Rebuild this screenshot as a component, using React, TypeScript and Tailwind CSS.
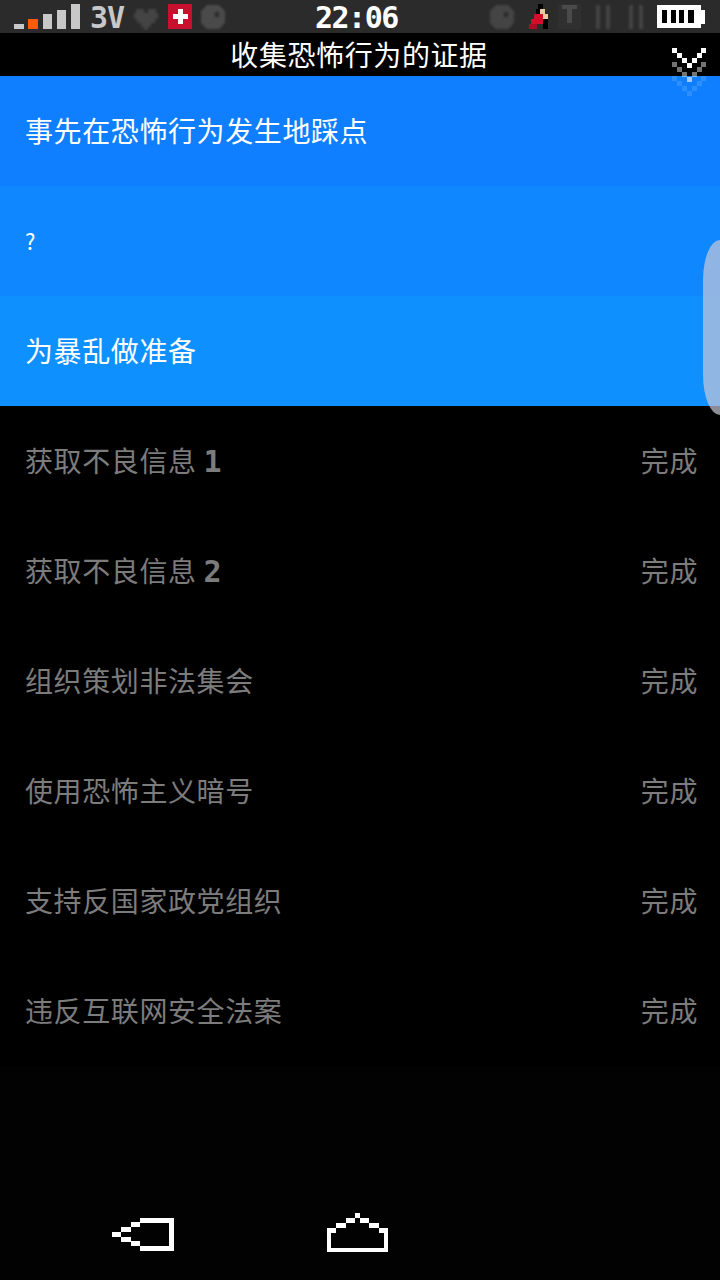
const cjk = { fontFamily: '"Noto Sans CJK SC", "Noto Sans", sans-serif' };
const pixel = { fontFamily: '"DejaVu Sans Mono", "Liberation Mono", monospace' };

const tasks = [
  { title: '获取不良信息', num: '1' },
  { title: '获取不良信息', num: '2' },
  { title: '组织策划非法集会' },
  { title: '使用恐怖主义暗号' },
  { title: '支持反国家政党组织' },
  { title: '违反互联网安全法案' },
];

const activeRows = [
  { title: '事先在恐怖行为发生地踩点', bg: 'bg-[#0f7fff]', size: 'text-[28px]' },
  { title: '?', bg: 'bg-[#0f88ff]', size: 'text-[22px]' },
  { title: '为暴乱做准备', bg: 'bg-[#0f90ff]', size: 'text-[28px]' },
];

function Rects({ w, h, fill, rects, className }: { w: number; h: number; fill: string; rects: number[][]; className?: string }) {
  return (
    <svg width={w} height={h} viewBox={`0 0 ${w} ${h}`} shapeRendering="crispEdges" fill={fill} className={`block shrink-0 ${className ?? ''}`}>
      {rects.map((r, i) => (
        <rect key={i} x={r[0]} y={r[1]} width={r[2]} height={r[3]} />
      ))}
    </svg>
  );
}

function Signal() {
  return (
    <svg width="67" height="25" viewBox="0 0 67 25" shapeRendering="crispEdges" className="block shrink-0">
      <rect x="0" y="20" width="10" height="5" fill="#c8c8c8" />
      <rect x="14" y="15" width="10" height="10" fill="#ff5a0a" />
      <rect x="29" y="10" width="9" height="15" fill="#c8c8c8" />
      <rect x="43" y="6" width="9" height="19" fill="#c8c8c8" />
      <rect x="57" y="0" width="9" height="25" fill="#c8c8c8" />
    </svg>
  );
}

function SwissFlag() {
  return (
    <svg width="24" height="25" viewBox="0 0 24 25" shapeRendering="crispEdges" className="block shrink-0">
      <rect width="24" height="25" fill="#c80f2e" />
      <rect x="10" y="5" width="5" height="15" fill="#fff" />
      <rect x="5" y="10" width="15" height="5" fill="#fff" />
    </svg>
  );
}

function Figure() {
  return (
    <svg width="20" height="25" viewBox="0 0 20 25" shapeRendering="crispEdges" className="block shrink-0">
      <rect x="9" y="0" width="5" height="5" fill="#000" />
      <rect x="7" y="5" width="5" height="5" fill="#000" />
      <rect x="11" y="5" width="5" height="5" fill="#f0c8a0" />
      <rect x="14" y="10" width="5" height="5" fill="#f0c8a0" />
      <rect x="5" y="10" width="9" height="5" fill="#d0102a" />
      <rect x="2" y="15" width="12" height="5" fill="#d0102a" />
      <rect x="14" y="15" width="5" height="10" fill="#000" />
      <rect x="0" y="20" width="8" height="5" fill="#a80f24" />
    </svg>
  );
}

function Battery() {
  return (
    <svg width="48" height="23" viewBox="0 0 48 23" shapeRendering="crispEdges" className="block shrink-0">
      <rect width="44" height="23" fill="#fff" />
      <rect x="44" y="5" width="4" height="14" fill="#fff" />
      <rect x="5" y="5" width="5" height="13" fill="#000" />
      <rect x="14" y="5" width="5" height="13" fill="#000" />
      <rect x="22" y="5" width="5" height="13" fill="#000" />
      <rect x="31" y="5" width="6" height="13" fill="#000" />
    </svg>
  );
}

function Heart() {
  return (
    <Rects
      w={24}
      h={23}
      fill="#444444"
      className="blur-[1px]"
      rects={[[2, 2, 8, 5], [14, 2, 8, 5], [0, 6, 24, 6], [3, 12, 18, 4], [7, 16, 10, 4], [10, 20, 4, 3]]}
    />
  );
}

function Gear({ color }: { color: string }) {
  return (
    <svg width="24" height="24" viewBox="0 0 24 24" className="block shrink-0 blur-[1px]">
      <path fill={color} fillRule="evenodd" d="M6 0H18L24 6V18L18 24H6L0 18V6ZM14 7V12H18V7Z" />
    </svg>
  );
}

function StatusBar() {
  return (
    <div className="relative flex h-[33px] shrink-0 items-center bg-[#2b2b2b] px-[14px]">
      <Signal />
      <span style={pixel} className="ml-[9px] mt-[3px] w-[36px] text-[30px] font-bold leading-[30px] tracking-[-1px] text-[#c8c8c8]">3V</span>
      <div className="ml-[8px] mt-[3px]"><Heart /></div>
      <div className="ml-[10px]"><SwissFlag /></div>
      <div className="ml-[9px]"><Gear color="#4a4a4a" /></div>
      <span style={pixel} className="ml-[90px] mt-[3px] w-[84px] text-[30px] font-bold leading-[30px] tracking-[-1.5px] text-white">22:06</span>
      <div className="ml-[91px]"><Gear color="#444444" /></div>
      <div className="ml-[15px]"><Figure /></div>
      <div className="ml-[9px] bg-[#303030]">
        <Rects w={23} h={25} fill="#4a4a4a" rects={[[4, 1, 15, 4], [9, 5, 5, 14]]} />
      </div>
      <div className="ml-[15px]">
        <Rects w={14} h={25} fill="#444444" className="blur-[1px]" rects={[[0, 1, 4, 24], [10, 1, 4, 24]]} />
      </div>
      <div className="ml-[19px]">
        <Rects w={14} h={25} fill="#444444" className="blur-[1px]" rects={[[0, 1, 4, 24], [10, 1, 4, 24]]} />
      </div>
      <div className="ml-[14px]"><Battery /></div>
    </div>
  );
}

function Chevrons() {
  const steps = [[0, 0], [5, 5], [10, 10], [15, 15], [20, 10], [25, 5], [29, 0]];
  return (
    <svg width="34" height="50" viewBox="0 0 34 50" shapeRendering="crispEdges" className="block">
      {steps.map((s, i) => <rect key={`a${i}`} x={s[0]} y={s[1]} width="5" height="5" fill="#fff" />)}
      {steps.map((s, i) => <rect key={`b${i}`} x={s[0]} y={s[1] + 14} width="5" height="5" fill="#fff" fillOpacity={i === 3 ? 0.6 : 0.45} />)}
      {steps.map((s, i) => <rect key={`c${i}`} x={s[0]} y={s[1] + 28} width="5" height="5" fill="#fff" fillOpacity="0.12" />)}
    </svg>
  );
}

function NavBar() {
  return (
    <div className="flex flex-1 items-start bg-[#020202] pl-[112px] pt-[147px]">
      <svg width="62" height="33" viewBox="0 0 62 33" shapeRendering="crispEdges" fill="#fff" className="mt-[5px] block">
        <rect x="28" y="0" width="34" height="5" />
        <rect x="57" y="0" width="5" height="33" />
        <rect x="28" y="28" width="34" height="5" />
        <rect x="19" y="4" width="9" height="5" />
        <rect x="9" y="9" width="10" height="5" />
        <rect x="0" y="14" width="9" height="5" />
        <rect x="9" y="19" width="10" height="5" />
        <rect x="19" y="23" width="9" height="5" />
      </svg>
      <svg width="61" height="39" viewBox="0 0 61 39" shapeRendering="crispEdges" fill="#fff" className="ml-[153px] block">
        <rect x="28" y="0" width="5" height="5" />
        <rect x="19" y="5" width="9" height="5" />
        <rect x="33" y="5" width="9" height="5" />
        <rect x="9" y="10" width="10" height="5" />
        <rect x="42" y="10" width="10" height="5" />
        <rect x="0" y="15" width="9" height="5" />
        <rect x="52" y="15" width="9" height="5" />
        <rect x="0" y="15" width="4" height="24" />
        <rect x="57" y="15" width="4" height="24" />
        <rect x="0" y="35" width="61" height="4" />
      </svg>
    </div>
  );
}

export default function App() {
  return (
    <div style={cjk} className="relative flex h-[1280px] w-[720px] flex-col overflow-hidden bg-black">
      <StatusBar />
      <div className="flex h-[43px] shrink-0 items-center justify-center bg-black pb-[2px] pr-[2px] text-[28px] leading-none tracking-[0.6px] text-white">
        收集恐怖行为的证据
      </div>

      {activeRows.map((row) => (
        <div key={row.title} className={`flex h-[110px] shrink-0 items-center px-[25px] pb-[3px] leading-none tracking-[0.6px] text-white ${row.size} ${row.bg}`}>
          {row.title}
        </div>
      ))}

      {tasks.map((task, i) => (
        <div key={i} className="flex h-[110px] shrink-0 items-center justify-between pb-[3px] pl-[25px] pr-[22px] text-[28px] leading-none tracking-[0.6px] text-[#7c7c7c]">
          <span className="flex items-center">
            {task.title}
            {task.num && (
              <span style={pixel} className="ml-[7px] mt-[5px] text-[30px] font-bold leading-none">{task.num}</span>
            )}
          </span>
          <span>完成</span>
        </div>
      ))}

      <NavBar />

      <div className="absolute right-[14px] top-[48px]"><Chevrons /></div>
      <div className="absolute right-0 top-[240px] h-[175px] w-[17px] rounded-l-[17px_40px] bg-[#c8c8d8]/70" />
    </div>
  );
}
